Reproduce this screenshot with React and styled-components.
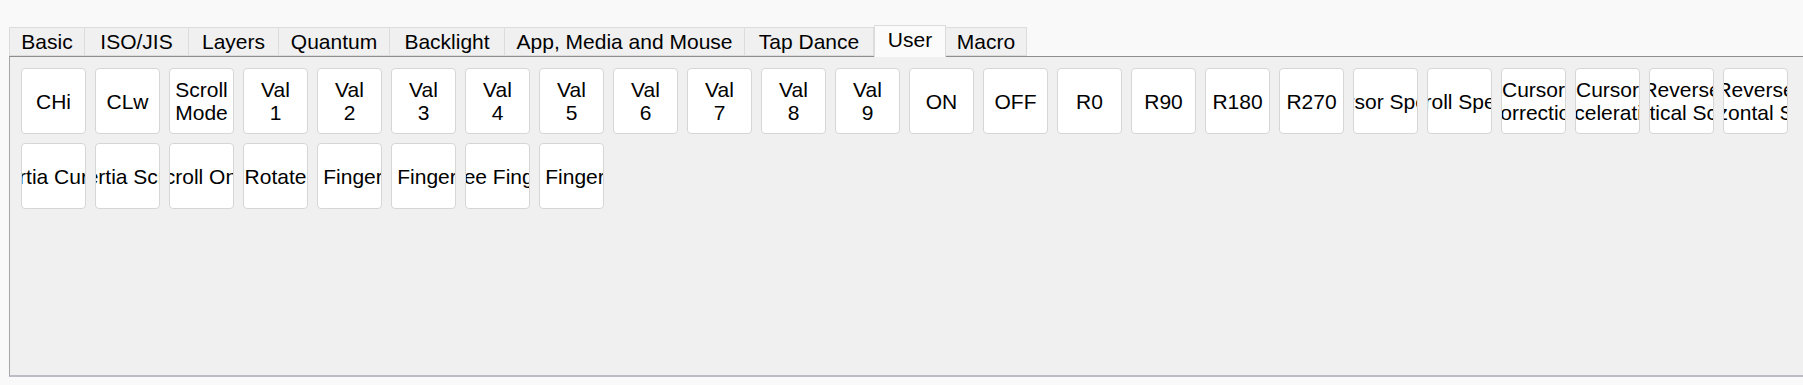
import React from "react";
import styled, { createGlobalStyle } from "styled-components";

const GlobalStyle = createGlobalStyle`
  html, body {
    margin: 0;
    padding: 0;
    background: #f9f9f9;
    font-family: "Liberation Sans", Arial, sans-serif;
    color: #000;
  }
`;

const tabs = [
  { name: "Basic", width: 76 },
  { name: "ISO/JIS", width: 104 },
  { name: "Layers", width: 90 },
  { name: "Quantum", width: 111 },
  { name: "Backlight", width: 115 },
  { name: "App, Media and Mouse", width: 240 },
  { name: "Tap Dance", width: 129 },
  { name: "User", width: 72 },
  { name: "Macro", width: 81 },
];

// labels wider than a key are clipped on both sides, like the original
const keys = [
  ["CHi"],
  ["CLw"],
  ["Scroll", "Mode"],
  ["Val", "1"],
  ["Val", "2"],
  ["Val", "3"],
  ["Val", "4"],
  ["Val", "5"],
  ["Val", "6"],
  ["Val", "7"],
  ["Val", "8"],
  ["Val", "9"],
  ["ON"],
  ["OFF"],
  ["R0"],
  ["R90"],
  ["R180"],
  ["R270"],
  ["Cursor Speed"],
  ["Scroll Speed"],
  ["Cursor", "Correction"],
  ["Cursor", "Acceleration"],
  ["Reverse", "Vertical Scroll"],
  ["Reverse", "Horizontal Scroll"],
  ["Inertia Cursor"],
  ["Inertia Scroll"],
  ["Scroll Only"],
  ["Rotate"],
  ["1 Fingers"],
  ["2 Fingers"],
  ["Three Fingers"],
  ["4 Fingers"],
];

const App = () => {
  const [current, setCurrent] = React.useState("User");

  return (
    <Wrapper>
      <GlobalStyle />
      <TabBar>
        {tabs.map((t) => (
          <Tab
            key={t.name}
            $w={t.width}
            $active={t.name === current}
            onClick={() => setCurrent(t.name)}
          >
            {t.name}
          </Tab>
        ))}
      </TabBar>
      <Pane>
        <KeyGrid>
          {keys.map((lines, i) => (
            <Key key={i}>
              {lines.map((line, j) => (
                <KeyLine key={j}>{line}</KeyLine>
              ))}
            </Key>
          ))}
        </KeyGrid>
      </Pane>
    </Wrapper>
  );
};

const Wrapper = styled.div`
  width: 100%;
  height: 385px;
  padding-top: 25px;
  box-sizing: border-box;
  overflow: hidden;
`;

const TabBar = styled.div`
  display: flex;
  align-items: flex-end;
  height: 31px;
  margin-left: 9px;
  position: relative;
  z-index: 1;
`;

const Tab = styled.div`
  box-sizing: border-box;
  width: ${(p) => p.$w}px;
  height: ${(p) => (p.$active ? 32 : 29)}px;
  margin-bottom: ${(p) => (p.$active ? -1 : 0)}px;
  display: flex;
  align-items: center;
  justify-content: center;
  font-size: 21px;
  background: ${(p) => (p.$active ? "#fbfbfb" : "#f0f0f0")};
  border: 1px solid #dcdcdc;
  border-bottom: ${(p) => (p.$active ? "none" : "1px solid #dcdcdc")};
  border-left: ${(p) => (p.$active ? "1px solid #dcdcdc" : "none")};
  padding-bottom: ${(p) => (p.$active ? 3 : 0)}px;
  cursor: default;

  &:first-child {
    border-left: 1px solid #dcdcdc;
  }
`;

const Pane = styled.div`
  box-sizing: border-box;
  margin-left: 9px;
  height: 321px;
  background: #f0f0f0;
  border-top: 1px solid #8e8e8e;
  border-left: 1px solid #a6a6a6;
  border-bottom: 2px solid #bdbcc4;
  padding: 11px 0 0 11px;
`;

const KeyGrid = styled.div`
  display: flex;
  flex-wrap: wrap;
  gap: 9px;
`;

const Key = styled.div`
  box-sizing: border-box;
  width: 65px;
  height: 66px;
  background: #fff;
  border: 1px solid #d6d6d6;
  border-radius: 4px;
  display: flex;
  flex-direction: column;
  align-items: center;
  justify-content: center;
  overflow: hidden;
  font-size: 21px;
  line-height: 23px;
`;

const KeyLine = styled.span`
  white-space: nowrap;
  flex-shrink: 0;
`;

export default App;
